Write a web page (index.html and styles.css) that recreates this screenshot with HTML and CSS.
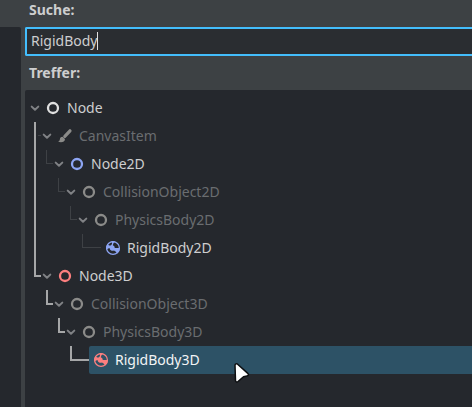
FILE: index.html
```html
<!DOCTYPE html>
<html lang="de">
<head>
<meta charset="utf-8">
<meta name="viewport" content="width=device-width, initial-scale=1">
<title>Node erstellen</title>
<link rel="stylesheet" href="styles.css">
</head>
<body>
<svg class="defs" aria-hidden="true">
  <symbol id="arrow" viewBox="0 0 12 12"><path d="M2.700 4.600 6 7.800 9.300 4.600" fill="none" stroke="currentColor" stroke-width="2" stroke-linecap="round" stroke-linejoin="round"/></symbol>
  <symbol id="ring" viewBox="0 0 16 16"><circle cx="8" cy="8" r="5" fill="none" stroke="currentColor" stroke-width="2.300"/></symbol>
  <symbol id="brush" viewBox="0 0 16 16"><path d="M13 2.800 7.800 8.300" fill="none" stroke="currentColor" stroke-width="3.200" stroke-linecap="round"/><path d="M5.600 8.700C3.700 8.700 3 10 2.900 11.200c-.1 1.200-.7 1.900-1.900 2.400 2.900 1.500 7 .6 7-2.500z" fill="currentColor"/></symbol>
  <symbol id="body" viewBox="0 0 16 16"><path d="M8 1a7 7 0 0 0-2 .3 2.300 2.300 0 1 1-3.500 2.400A7 7 0 0 0 1.300 10 5 5 0 0 1 4.500 8 3.200 3.200 0 0 0 9 10.500 9 9 0 0 1 12.300 13.500 7 7 0 0 0 15 8H9.800A2.800 2.800 0 0 0 7.800 5.300 5 5 0 0 1 10.200 1.400 7 7 0 0 0 8 1z" fill="currentColor"/><circle cx="8" cy="8" r="6.400" fill="none" stroke="currentColor" stroke-width="1.200"/></symbol>
</svg>
<div class="dialog">
  <aside class="side"></aside>
  <main class="main">
    <label class="caption" for="search">Suche:</label>
    <div class="search">
      <input id="search" class="field" type="text" value="RigidBody">
      <span class="caret"></span>
    </div>
    <h2 class="caption matches">Treffer:</h2>
    <div class="tree">
      <ul class="root">
        <li>
          <div class="row"><svg class="arrow"><use href="#arrow"/></svg><div class="item"><svg class="icon white"><use href="#ring"/></svg>Node</div></div>
          <ul class="first">
            <li class="trunk">
              <div class="row"><span class="link dash"></span><svg class="arrow"><use href="#arrow"/></svg><div class="item muted"><svg class="icon"><use href="#brush"/></svg>CanvasItem</div></div>
              <ul>
                <li>
                  <div class="row"><span class="link"></span><svg class="arrow"><use href="#arrow"/></svg><div class="item"><svg class="icon blue"><use href="#ring"/></svg>Node2D</div></div>
                  <ul>
                    <li>
                      <div class="row"><span class="link"></span><svg class="arrow"><use href="#arrow"/></svg><div class="item muted"><svg class="icon"><use href="#ring"/></svg>CollisionObject2D</div></div>
                      <ul>
                        <li>
                          <div class="row"><span class="link"></span><svg class="arrow"><use href="#arrow"/></svg><div class="item muted"><svg class="icon"><use href="#ring"/></svg>PhysicsBody2D</div></div>
                          <ul>
                            <li>
                              <div class="row"><span class="link leaf"></span><div class="item"><svg class="icon blue"><use href="#body"/></svg>RigidBody2D</div></div>
                            </li>
                          </ul>
                        </li>
                      </ul>
                    </li>
                  </ul>
                </li>
              </ul>
            </li>
            <li>
              <div class="row"><span class="link strong"></span><svg class="arrow"><use href="#arrow"/></svg><div class="item"><svg class="icon red"><use href="#ring"/></svg>Node3D</div></div>
              <ul>
                <li>
                  <div class="row"><span class="link strong"></span><svg class="arrow"><use href="#arrow"/></svg><div class="item muted"><svg class="icon"><use href="#ring"/></svg>CollisionObject3D</div></div>
                  <ul>
                    <li>
                      <div class="row"><span class="link strong"></span><svg class="arrow"><use href="#arrow"/></svg><div class="item muted"><svg class="icon"><use href="#ring"/></svg>PhysicsBody3D</div></div>
                      <ul>
                        <li>
                          <div class="row"><span class="link strong leaf"></span><div class="item selected"><svg class="icon red"><use href="#body"/></svg>RigidBody3D<svg class="pointer" viewBox="0 0 18 24"><path d="M2 4.500C2 2.800 3.500 2.300 4.600 3.200L14.800 12.400C16 13.500 15.500 14.800 14 15L10.500 15.700 5 20.500C3.900 21.400 2.600 20.900 2.500 19.500Z" fill="#fff" stroke="#0c0e10" stroke-width="1.500" stroke-linejoin="round"/></svg></div></div>
                        </li>
                      </ul>
                    </li>
                  </ul>
                </li>
              </ul>
            </li>
          </ul>
        </li>
      </ul>
    </div>
  </main>
</div>
</body>
</html>
```
FILE: styles.css
```css
* {
  box-sizing: border-box;
}

body {
  margin: 0;
  background: #3d4144;
  color: #cdcecf;
  font: 14px/20px "Noto Sans", sans-serif;
}

.defs {
  position: absolute;
  width: 0;
  height: 0;
}

.dialog {
  display: flex;
  gap: 4px;
  min-height: 100vh;
  overflow: hidden;
}

.side {
  flex: 0 0 21px;
  margin-top: 27px;
  background: #25282d;
  border-top-right-radius: 2px;
}

.main {
  flex: 1;
  min-width: 0;
  display: flex;
  flex-direction: column;
}

.caption {
  margin: 0;
  padding: 0 4px 7px;
  font-size: 14px;
  font-weight: 700;
  line-height: 20px;
}

.matches {
  padding-top: 7px;
}

.search {
  position: relative;
}

.field {
  display: block;
  width: 100%;
  height: 29px;
  padding: 0 4px 2px;
  border: 2px solid #43bdfc;
  border-right: 0;
  border-radius: 2px 0 0 2px;
  outline: 0;
  background: #2a2d31;
  color: #cdcecf;
  font: inherit;
}

.caret {
  position: absolute;
  top: 5px;
  left: 72px;
  width: 1px;
  height: 18px;
  background: #e0e0e0;
}

.tree {
  flex: 1;
  padding: 4px 0 4px 4px;
  border-top-left-radius: 2px;
  background: #25282d;
}

ul {
  margin: 0 0 0 12px;
  padding: 0;
  list-style: none;
}

.root {
  margin-left: 0;
}

.first {
  margin-left: 5px;
}

.trunk {
  box-shadow: inset 2px 0 #a6a7a8;
}

.row {
  display: flex;
  align-items: center;
  height: 28px;
}

.link {
  flex: 0 0 7px;
  align-self: flex-start;
  height: 14px;
  border: solid #3e4145;
  border-width: 0 0 1px 1px;
}

.link.strong {
  height: 15px;
  border-color: #a6a7a8;
  border-width: 0 0 2px 2px;
}

.link.leaf {
  flex-basis: 19px;
}

.link.dash {
  flex-basis: 3px;
  margin-left: 4px;
  border-left: 0;
}

.arrow {
  flex: 0 0 12px;
  height: 12px;
  color: #808285;
}

.item {
  position: relative;
  flex: 1;
  display: flex;
  align-items: center;
  gap: 6px;
  height: 28px;
  padding-left: 4px;
}

.icon {
  flex: 0 0 16px;
  height: 16px;
}

.muted {
  color: #6a6d70;
}

.muted .icon {
  color: #8b8b89;
}

.white {
  color: #e0e0e0;
}

.blue {
  color: #8da5f3;
}

.red {
  color: #fc7f7f;
}

.selected {
  background: #2d5266;
  color: #f2f4f5;
  border-radius: 2px 0 0 2px;
}

.pointer {
  position: absolute;
  top: 15px;
  left: 144px;
  width: 18px;
  height: 24px;
}
```
